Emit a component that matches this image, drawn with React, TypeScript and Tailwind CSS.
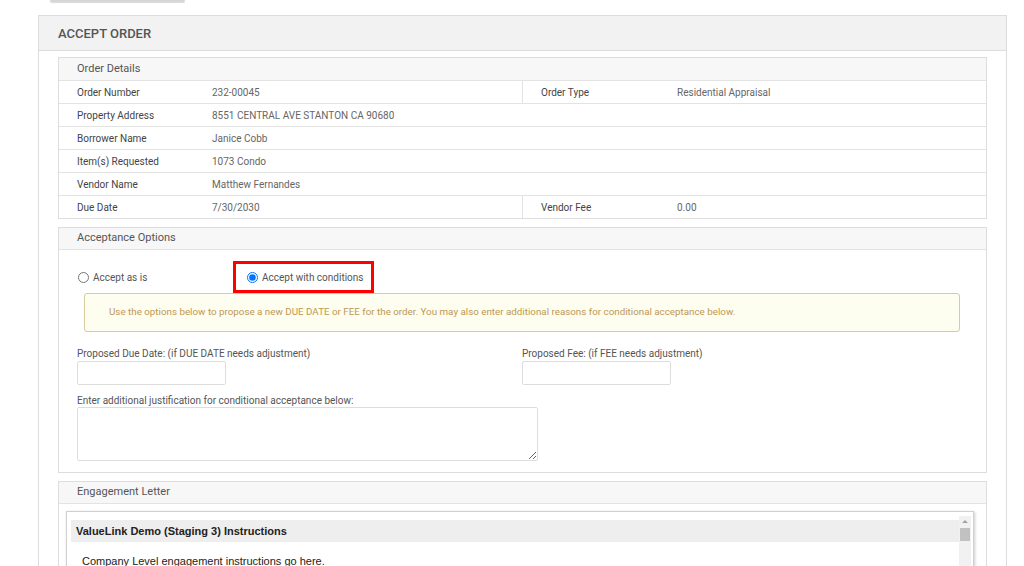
import React from "react";

const rows: { l: string; v: string; l2?: string; v2?: string }[] = [
  { l: "Order Number", v: "232-00045", l2: "Order Type", v2: "Residential Appraisal" },
  { l: "Property Address", v: "8551 CENTRAL AVE STANTON CA 90680" },
  { l: "Borrower Name", v: "Janice Cobb" },
  { l: "Item(s) Requested", v: "1073 Condo" },
  { l: "Vendor Name", v: "Matthew Fernandes" },
  { l: "Due Date", v: "7/30/2030", l2: "Vendor Fee", v2: "0.00" },
];

export default function App() {
  return (
    <div
      className="relative h-[566px] w-[1024px] overflow-hidden bg-white"
      style={{ fontFamily: "Roboto, 'Liberation Sans', Arial, sans-serif" }}
    >
      <div className="ml-[50px] h-[2px] w-[135px] rounded-b-[3px] bg-[#d6d6d6] shadow-[0_1px_1px_rgba(0,0,0,0.15)]" />
      <div className="ml-[38px] mt-[13px] w-[969px] border border-[#dddddd]">
        <div className="flex h-[35px] items-center border-b border-[#dddddd] bg-[#f2f2f2] pl-[19px] pt-[1px] text-[13px] font-medium text-[#555555]">
          ACCEPT ORDER
        </div>
        <div className="px-[19px] pt-[6px]">
          {/* Order Details */}
          <div className="border border-[#dddddd]">
            <div className="flex h-[22px] items-center bg-[#f7f7f7] pl-[18px] text-[11px] text-[#555555]">
              Order Details
            </div>
            {rows.map((r) => (
              <div key={r.l} className="flex h-[23px] border-t border-[#e3e3e3] text-[10px]">
                <div className="flex w-[463px] items-center pl-[18px]">
                  <span className="w-[135px] text-[#444444]">{r.l}</span>
                  <span className="text-[#666666]">{r.v}</span>
                </div>
                {r.l2 ? (
                  <div className="flex flex-1 items-center border-l border-[#e3e3e3] pl-[18px]">
                    <span className="w-[136px] text-[#444444]">{r.l2}</span>
                    <span className="text-[#666666]">{r.v2}</span>
                  </div>
                ) : null}
              </div>
            ))}
          </div>

          {/* Acceptance Options */}
          <div className="mt-[8px] border border-[#dddddd]">
            <div className="flex h-[22px] items-center border-b border-[#e3e3e3] bg-[#f7f7f7] pl-[18px] text-[11px] text-[#555555]">
              Acceptance Options
            </div>
            <div className="px-[18px] pb-[11px] pt-[11px]">
              <div className="flex h-[32px] items-stretch text-[10px] text-[#555555]">
                <label className="flex w-[156px] items-center gap-[4px] pl-[1px]">
                  <input type="radio" name="acc" className="m-0 h-[11px] w-[11px]" />
                  <span>Accept as is</span>
                </label>
                <label className="flex w-[141px] items-center gap-[4px] border-[3px] border-[#ff0000] pl-[11px]">
                  <input type="radio" name="acc" defaultChecked className="m-0 h-[11px] w-[11px]" />
                  <span>Accept with conditions</span>
                </label>
              </div>
              <div className="ml-[7px] flex h-[39px] w-[876px] items-center rounded-[3px] border border-[#d8cc9c] bg-[#fdfdf0] pl-[24px] text-[9.8px] text-[#c09853]">
                Use the options below to propose a new DUE DATE or FEE for the order. You may also enter additional reasons for conditional acceptance below.
              </div>
              <div className="mt-[14px] flex text-[10px] text-[#555555]">
                <div className="w-[445px]">
                  <div className="h-[15px] leading-[15px]">Proposed Due Date: (if DUE DATE needs adjustment)</div>
                  <input className="block h-[24px] w-[149px] rounded-[2px] border border-[#dddddd] outline-none" />
                </div>
                <div>
                  <div className="h-[15px] leading-[15px]">Proposed Fee: (if FEE needs adjustment)</div>
                  <input className="block h-[24px] w-[149px] rounded-[2px] border border-[#dddddd] outline-none" />
                </div>
              </div>
              <div className="mt-[9px] h-[13px] text-[10px] leading-[13px] text-[#555555]">
                Enter additional justification for conditional acceptance below:
              </div>
              <textarea className="block h-[54px] w-[461px] rounded-[2px] border border-[#dddddd] outline-none" />
            </div>
          </div>

          {/* Engagement Letter */}
          <div className="mt-[8px] border border-[#dddddd]">
            <div className="flex h-[22px] items-center border-b border-[#e3e3e3] bg-[#f7f7f7] pl-[18px] text-[11px] text-[#555555]">
              Engagement Letter
            </div>
            <div className="pl-[7px] pr-[12px] pt-[7px]">
              <div
                className="flex h-[80px] border border-[#d0d0d0] pl-[4px] pr-[2px] pt-[4px] shadow-[1px_1px_3px_rgba(0,0,0,0.2)]"
                style={{ fontFamily: "'Liberation Sans', Arial, sans-serif" }}
              >
                <div className="flex-1">
                  <div className="mt-[4px] flex h-[22px] items-center bg-[#eeeeee] pl-[5px] text-[11px] font-bold text-[#222222]">
                    ValueLink Demo (Staging 3) Instructions
                  </div>
                  <div className="pl-[11px] pt-[11px] text-[11px] text-[#222222]">
                    Company Level engagement instructions go here.
                  </div>
                </div>
                <div className="flex w-[12px] flex-col items-center bg-[#f1f1f1]">
                  <div className="mt-[4px] h-0 w-0 border-x-[3px] border-b-[3px] border-x-transparent border-b-[#a3a3a3]" />
                  <div className="mt-[5px] h-[13px] w-[10px] bg-[#c1c1c1]" />
                </div>
              </div>
            </div>
          </div>
        </div>
      </div>
    </div>
  );
}
